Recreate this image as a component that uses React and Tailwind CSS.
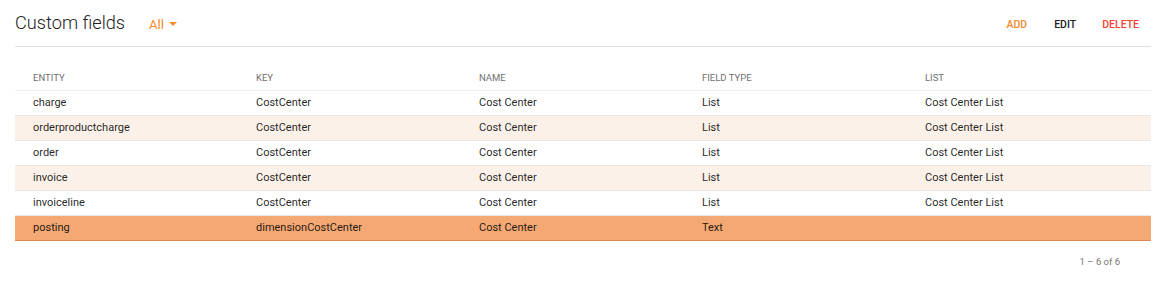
import React from "react";

const rows = [
  { entity: "charge", key: "CostCenter", name: "Cost Center", type: "List", list: "Cost Center List", bg: "bg-white" },
  { entity: "orderproductcharge", key: "CostCenter", name: "Cost Center", type: "List", list: "Cost Center List", bg: "bg-[#fcf1e8]" },
  { entity: "order", key: "CostCenter", name: "Cost Center", type: "List", list: "Cost Center List", bg: "bg-white" },
  { entity: "invoice", key: "CostCenter", name: "Cost Center", type: "List", list: "Cost Center List", bg: "bg-[#fcf1e8]" },
  { entity: "invoiceline", key: "CostCenter", name: "Cost Center", type: "List", list: "Cost Center List", bg: "bg-white" },
  { entity: "posting", key: "dimensionCostCenter", name: "Cost Center", type: "Text", list: "", bg: "bg-[#f4a874]", sel: true },
];

export default function App() {
  return (
    <div className="w-[1166px] h-[296px] bg-white px-[15px] font-['Roboto',sans-serif] text-[rgba(0,0,0,0.87)]">
      <div className="h-[47px] border-b border-[#e0e0e0] flex items-center">
        <div className="flex items-baseline pt-[1px]">
          <span className="text-[18.2px] font-light text-[#212121] leading-none">Custom fields</span>
          <span className="ml-[24px] text-[13px] text-[#f5892e] flex items-center leading-none">
            All
            <svg width="8" height="4" viewBox="0 0 8 4" className="ml-[5px] mb-[2px]">
              <path d="M0 0 L8 0 L4 4 Z" fill="#f5892e" />
            </svg>
          </span>
        </div>
        <div className="ml-auto flex items-center text-[10.5px] font-medium pt-[4px] pr-[12px]">
          <span className="text-[#f5892e]">ADD</span>
          <span className="ml-[27px] text-[#212121]">EDIT</span>
          <span className="ml-[26px] text-[#f44336]">DELETE</span>
        </div>
      </div>

      <div className="mt-[19px]">
        <div className="h-[25px] grid grid-cols-[223px_223px_223px_223px_1fr] pl-[18px] pt-[1px] items-center border-b border-[#eeeeee] text-[9.5px] text-[#707070]">
          <div>ENTITY</div>
          <div>KEY</div>
          <div>NAME</div>
          <div>FIELD TYPE</div>
          <div>LIST</div>
        </div>
        {rows.map((r, i) => (
          <div
            key={i}
            className={`h-[25px] grid grid-cols-[223px_223px_223px_223px_1fr] pl-[18px] pt-[1px] items-center text-[11px] ${r.bg} ${r.sel ? "border-b border-[#dc8a55]" : "border-b border-[#ebe6e2]"}`}
          >
            <div>{r.entity}</div>
            <div>{r.key}</div>
            <div>{r.name}</div>
            <div>{r.type}</div>
            <div>{r.list}</div>
          </div>
        ))}
      </div>

      <div className="h-[42px] flex items-center justify-end pr-[31px] text-[9.5px] text-[#757575]">
        1 – 6 of 6
      </div>
    </div>
  );
}
